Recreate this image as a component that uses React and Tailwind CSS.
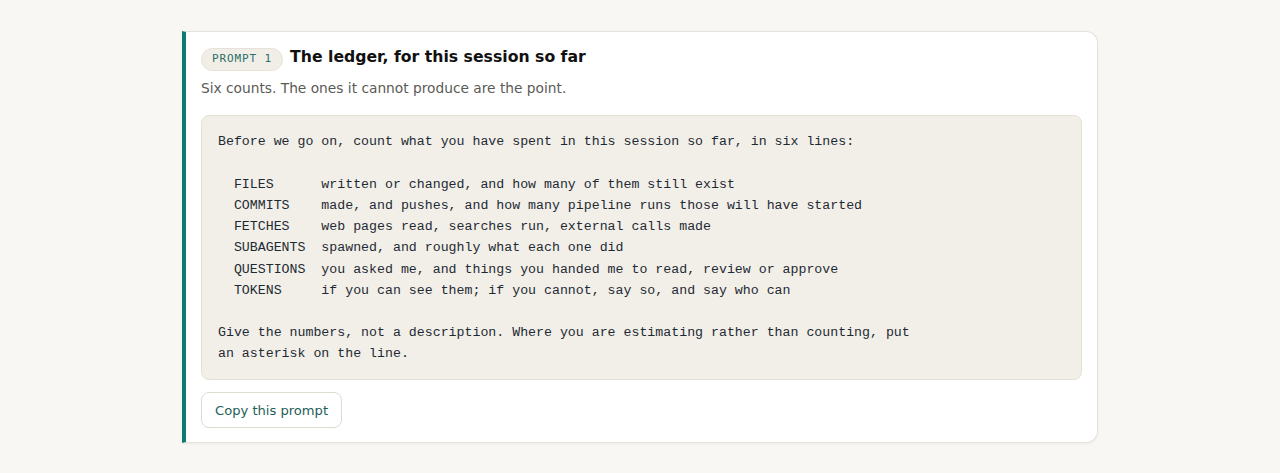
import React from "react";

const rows = [
  ["FILES", "written or changed, and how many of them still exist"],
  ["COMMITS", "made, and pushes, and how many pipeline runs those will have started"],
  ["FETCHES", "web pages read, searches run, external calls made"],
  ["SUBAGENTS", "spawned, and roughly what each one did"],
  ["QUESTIONS", "you asked me, and things you handed me to read, review or approve"],
  ["TOKENS", "if you can see them; if you cannot, say so, and say who can"],
];

const promptText =
  "Before we go on, count what you have spent in this session so far, in six lines:\n\n" +
  rows.map(([k, v]) => "  " + k.padEnd(11, " ") + v).join("\n") +
  "\n\nGive the numbers, not a description. Where you are estimating rather than counting, put\nan asterisk on the line.";

const App = () => {
  return (
    <div className="min-h-[473px] bg-[#f8f7f3] pt-[31px] font-['DejaVu_Sans',sans-serif]">
      <div className="mx-auto w-[916px] bg-white border border-[#e7e2d9] border-l-[4px] border-l-[#0f7a6e] rounded-r-xl shadow-[0_1px_3px_rgba(0,0,0,0.05)] pl-[15px] pr-[15px] pt-[13px] pb-[14px]">
        <div className="flex items-baseline gap-[7px]">
          <span className="inline-flex items-center h-[23px] px-[10px] rounded-full bg-[#f1eee7] border border-[#e7e2d9] text-[#2a6e69] font-['DejaVu_Sans_Mono',monospace] text-[11px] tracking-[0.08em]">
            PROMPT 1
          </span>
          <h2 className="text-[15.7px] font-bold text-[#111]">
            The ledger, for this session so far
          </h2>
        </div>
        <p className="mt-[7px] text-[13.75px] text-[#5a5a55]">
          Six counts. The ones it cannot produce are the point.
        </p>
        <pre className="mt-[17px] bg-[#f2efe9] border border-[#e6e1d8] rounded-lg pl-[16px] pr-[16px] pt-[15px] pb-[15px] font-['Liberation_Mono',monospace] text-[13.25px] leading-[1.6] text-[#1e2a33] whitespace-pre">
          {promptText}
        </pre>
        <button className="mt-[12px] h-[36px] px-[13px] rounded-lg border border-[#e0dbd1] bg-white text-[#1d5e58] text-[13.1px]">
          Copy this prompt
        </button>
      </div>
    </div>
  );
};

export default App;
